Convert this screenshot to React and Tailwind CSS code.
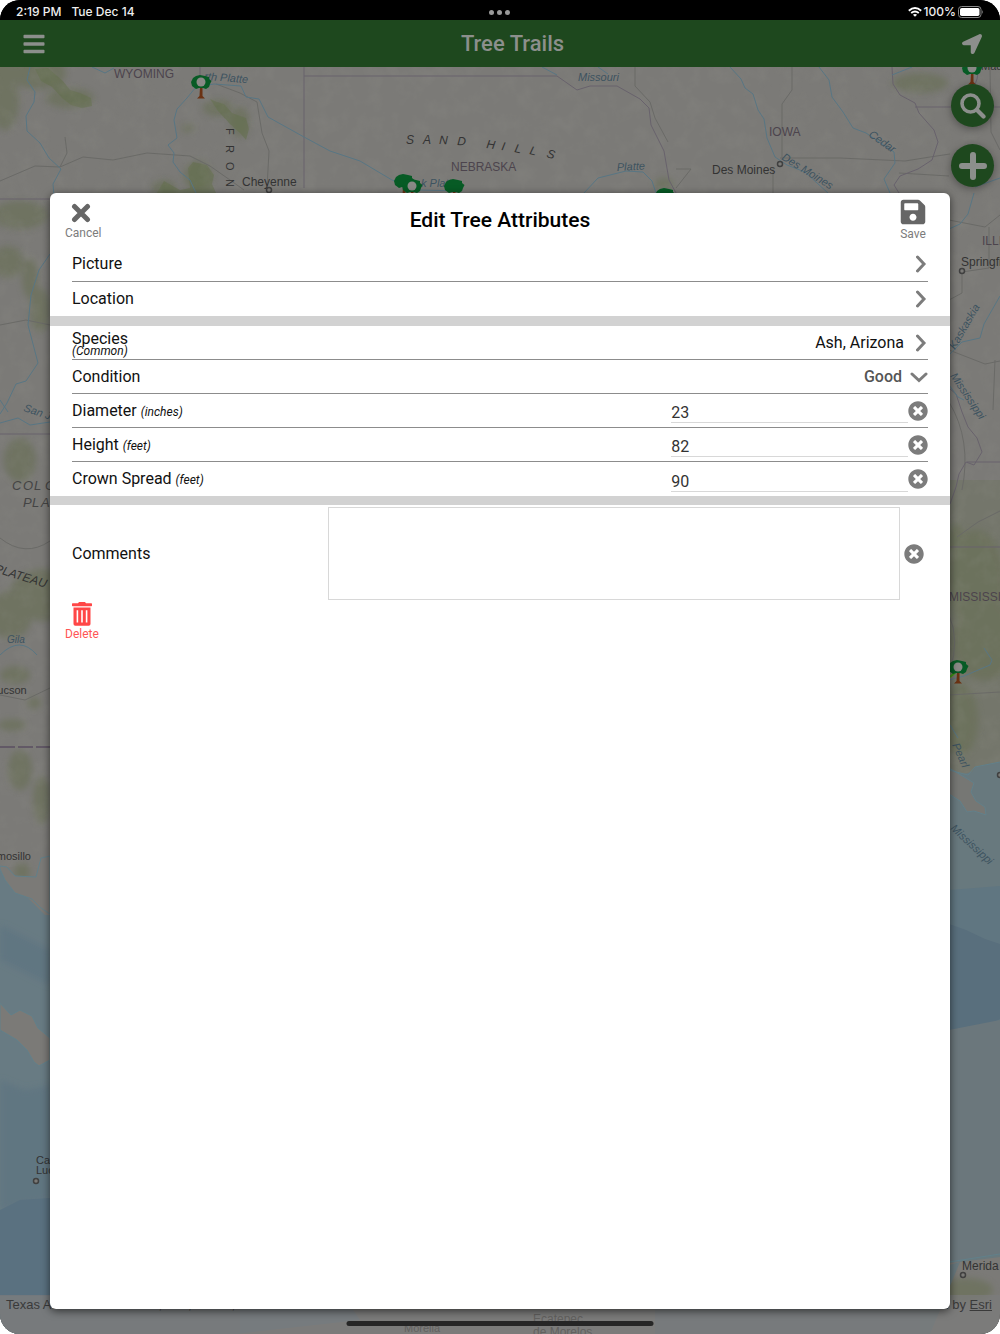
import { useState } from "react"
import { FaBars, FaLocationArrow, FaSave, FaTimesCircle } from "react-icons/fa"

const sandHills = [
    ["S", 410, 144, 0], ["A", 427, 144, 0], ["N", 443, 144, 2], ["D", 461, 145, 4],
    ["H", 490, 148, 8], ["I", 505, 150, 10], ["L", 518, 152, 12], ["L", 533, 154, 14], ["S", 550, 157, 16],
]

const rivers = [
    "M30 67 L27 80 L35 92 L34 102 L26 116 L27 131 L40 143 L49 158 L61 169 L53 184 L54 196",
    "M92 67 L105 73 L114 68",
    "M196 193 L190 180 L180 172 L173 162 L174 153 L168 145 L177 138 L174 120 L177 109 L187 98 L196 87 L214 84 L241 86 L246 97 L259 99 L268 117 L304 137 L330 151 L360 161 L392 180 L420 190 L460 191",
    "M584 193 L598 178 L626 171 L643 172 L652 181 L656 193",
    "M542 67 L557 75 M598 67 L608 74",
    "M730 67 L741 79 L745 88 L753 94 L758 110 L764 119 L767 138 L775 157 L787 165 L805 172 L828 193",
    "M819 67 L829 80 L832 97 L843 112 L853 128 L866 133 L894 152 L895 163 L884 179 L890 193",
    "M892 75 L912 67 M975 187 L1000 178",
    "M50 254 L39 270 L31 295 L28 325 L38 363 L26 381 L16 384 L7 403 L0 414",
    "M0 423 L18 418 L30 425 L50 422 M0 400 L8 412",
    "M0 655 Q20 635 37 655",
    "M974 193 L968 214 L960 224 L949 229",
    "M1000 296 L984 324 L980 338 L962 342 L949 355",
    "M949 385 L958 397 L964 400 M949 680 L964 676 L990 665 L992 660 L984 648",
    "M950 725 L958 738",
]

const roads = [
    "M0 181 L35 166 L60 167 L83 157 L113 160 L147 153 L190 156 L210 166 L230 180 L244 190",
    "M60 167 L67 153 L65 137 M216 84 L240 93 L257 102 L262 133 L269 151 L267 188",
    "M792 67 L792 90 L782 104 L782 158 M780 158 L840 158 L905 161 L930 157 L950 154",
    "M676 169 L691 169 L676 188 M990 67 L991 132 L1000 150 M899 173 L949 176",
    "M773 168 L773 193 M635 67 L635 86 L650 102 L655 118 L668 142",
    "M0 325 L26 320 L50 325 M0 538 Q25 558 50 541 M0 695 L25 700 L50 688",
    "M949 220 L985 227 L1000 215 M989 227 L989 268 L962 272 L962 293 L949 300",
    "M949 350 L985 364 L1000 361 M995 360 L993 410 M949 402 Q972 440 962 490",
    "M957 537 L978 522 L1000 511 M949 615 Q960 640 950 670 M949 695 L1000 692",
]

const borders = [
    "M304 67 L304 188 M304 76 L557 76 L577 90 L590 86 L617 86 L640 99 L649 108 L651 125 L664 151 L669 180 L676 193",
    "M979 67 L977 79 L972 93 L985 120",
    "M892 67 L893 84 L900 95 L915 103 L919 113 L934 130 L938 142 L932 160 L918 169 L900 176 L894 185 L899 193",
    "M915 107 L1000 107 M200 67 L200 76 M0 199 L50 199 M0 434 L50 434",
    "M949 388 L956 394 L962 412 L968 427 L977 438 L982 452 L974 465 L966 462 L959 474 L956 487 L950 504",
    "M967 462 L1000 462 M949 547 L1000 547",
]

const greens = [
    [0, 67, 14, 60], [38, 73, 28, 16], [70, 98, 24, 10], [5, 100, 14, 30], [218, 108, 15, 8], [240, 122, 9, 15],
    [198, 176, 14, 15], [164, 188, 12, 8], [188, 128, 7, 4], [20, 215, 28, 14], [8, 262, 16, 16],
    [30, 278, 8, 20], [40, 310, 10, 22], [20, 460, 16, 22], [43, 595, 34, 26], [10, 615, 22, 24],
    [15, 675, 15, 9], [34, 703, 7, 6], [12, 725, 14, 6], [20, 770, 12, 20], [42, 800, 9, 24],
    [22, 872, 8, 9], [36, 1035, 5, 12], [975, 580, 30, 50], [985, 640, 34, 40], [960, 720, 18, 36],
    [965, 1290, 28, 12], [955, 540, 10, 16], [920, 83, 28, 10], [664, 184, 10, 6],
]

function TreeMarker({ x, y, hollow = true }) {
    return (
        <g transform={`translate(${x} ${y})`}>
            <path d="M-1 5 L-1.5 14 L-4 16.500 H4 L1.500 14 L1.500 5Z" fill="#6b3213" />
            <path
                d="M-10 0 L-8 -4 L-5 -6 L-1 -7 L4 -6 L8 -5 L8 -3 L10.500 -1 L9 2 L8 5 L5 7 L2 6 L-2 6 L-5 7 L-9 4Z"
                fill="#075b25"
            />
            {hollow && <circle r="4.500" fill="#898986" />}
        </g>
    )
}

function MapLabel({ x, y, size = 11, fill = "#333", rotate = 0, italic = false, children }) {
    return (
        <text
            x={x}
            y={y}
            fontSize={size}
            fill={fill}
            fontStyle={italic ? "italic" : "normal"}
            transform={`rotate(${rotate} ${x} ${y})`}
        >
            {children}
        </text>
    )
}

function MapBackground() {
    return (
        <svg
            viewBox="0 67 1000 1267"
            preserveAspectRatio="xMidYMin slice"
            className="absolute inset-0 h-full w-full font-['Liberation_Sans',sans-serif]"
            aria-hidden="true"
        >
            <defs>
                <filter id="relief" x="0" y="0" width="100%" height="100%">
                    <feTurbulence type="fractalNoise" baseFrequency="0.06" numOctaves="4" seed="4" />
                    <feColorMatrix values="0 0 0 0 0.3  0 0 0 0 0.3  0 0 0 0 0.27  0.9 0 0 0 -0.38" />
                </filter>
                <filter id="soft"><feGaussianBlur stdDeviation="3" /></filter>
            </defs>
            <rect y="67" width="1000" height="1267" fill="#7b7a77" />
            <rect x="949" y="480" width="51" height="350" fill="#74766b" />
            <g fill="#697057" opacity="0.65" filter="url(#soft)">
                {greens.map(([cx, cy, rx, ry], i) => (
                    <ellipse key={i} cx={cx} cy={cy} rx={rx} ry={ry} />
                ))}
            </g>
            <g fill="#65704f" opacity="0.6">
                <path d="M35 69 L48 68 L56 75 L63 81 L70 90 L80 93 L91 98 L92 106 L82 108 L71 105 L62 98 L52 87 L41 81Z" />
                <path d="M210 99 L217 102 L224 104 L232 113 L246 118 L249 129 L246 140 L240 133 L230 124 L218 111Z" />
                <path d="M188 168 L193 162 L207 165 L214 175 L212 184 L216 193 L157 193 L164 181 L180 190 L190 188Z" />
            </g>
            <rect y="67" width="1000" height="800" filter="url(#relief)" opacity="0.4" />

            {/* Pacific and Gulf of California */}
            <path d="M0 867 L7 870 L15 885 L30 900 L45 915 L80 915 L360 1320 L235 1334 L0 1334Z" fill="#687b83" />
            <path d="M0 925 L50 950 L50 985 L0 960Z M0 1080 L25 1090 L50 1085 L50 1200 L0 1210Z" fill="#607681" filter="url(#soft)" />
            <path d="M0 1210 L20 1200 L50 1198 L50 1296 L0 1296Z" fill="#5a7180" />
            <path
                d="M0 1003 L11 1015 L20 1010 L32 1016 L38 1028 L50 1038 L50 1060 L39 1066 L34 1062 L27 1050 L17 1040 L0 1030Z"
                fill="#7b7a77"
                stroke="#62808a"
            />
            <path d="M0 866 L7 867 L15 876 L36 877 L41 858 L50 856 L50 914 L41 908 L32 899 L15 893 L5 880 L0 869Z" fill="#7b7a77" stroke="#62808a" />

            {/* Gulf of Mexico */}
            <path d="M949 770 L963 774 L972 772 L975 767 L1000 762 L1000 1257 L960 1262 L700 1334 L930 1334 L960 1262 L949 1263Z" fill="#68797e" />
            <path d="M949 890 L1000 886 L1000 1025 L949 1035Z" fill="#607681" />
            <path d="M949 924 L966 930 L985 939 L1000 944 L1000 1019 L980 1029 L949 1034Z" fill="#596f7d" />
            <path d="M949 1030 L1000 1020 L1000 1254 L949 1262Z" fill="#6b777c" />
            <path
                d="M949 768 L966 778 L974 783 L971 792 L976 801 L985 807 L986 815 L974 811 L967 812 L960 801 L949 794Z"
                fill="#767774"
                stroke="#62808a"
            />
            <path d="M0 1309 H240 V1334 H0Z M655 1309 H920 V1334 H655Z" fill="#6b777c" />
            <path d="M949 1262 L1000 1254 M949 770 L968 775 L975 767 L1000 762" fill="none" stroke="#62808a" />

            <g fill="none" strokeLinejoin="round">
                <g stroke="#6a6a67">{roads.map((d) => <path key={d} d={d} />)}</g>
                <g stroke="#68626c">{borders.map((d) => <path key={d} d={d} />)}</g>
                <g stroke="#587684">{rivers.map((d) => <path key={d} d={d} />)}</g>
                <path d="M0 747 H50" stroke="#625966" strokeWidth="2" strokeDasharray="15 3" />
            </g>

            <MapLabel x={114} y={78} size={12} fill="#4c444d">WYOMING</MapLabel>
            <MapLabel x={451} y={171} size={12} fill="#4c444d">NEBRASKA</MapLabel>
            <MapLabel x={769} y={136} size={12} fill="#4c444d">IOWA</MapLabel>
            <MapLabel x={982} y={245} size={12} fill="#4c444d">ILLINOIS</MapLabel>
            <MapLabel x={949} y={601} size={12} fill="#4c444d">MISSISSIPPI</MapLabel>
            <MapLabel x={242} y={186} size={12}>Cheyenne</MapLabel>
            <MapLabel x={712} y={174} size={12}>Des Moines</MapLabel>
            <MapLabel x={961} y={266} size={12}>Springfield</MapLabel>
            <MapLabel x={981} y={70}>Madison</MapLabel>
            <MapLabel x={-9} y={694}>Tucson</MapLabel>
            <MapLabel x={-21} y={860}>Hermosillo</MapLabel>
            <MapLabel x={36} y={1164}>Cabo San</MapLabel>
            <MapLabel x={36} y={1174}>Lucas</MapLabel>
            <MapLabel x={962} y={1270} size={12}>Merida</MapLabel>
            <MapLabel x={204} y={80} fill="#3d5360" rotate={4} italic>rth Platte</MapLabel>
            <MapLabel x={578} y={81} fill="#3d5360" italic>Missouri</MapLabel>
            <MapLabel x={617} y={171} fill="#3d5360" rotate={-3} italic>Platte</MapLabel>
            <MapLabel x={421} y={187} fill="#3d5360" italic>k Platte</MapLabel>
            <MapLabel x={868} y={136} fill="#3d5360" rotate={35} italic>Cedar</MapLabel>
            <MapLabel x={781} y={159} fill="#3d5360" rotate={32} italic>Des Moines</MapLabel>
            <MapLabel x={23} y={411} fill="#3d5360" rotate={18} italic>San Juan</MapLabel>
            <MapLabel x={7} y={643} size={10} fill="#3d5360" italic>Gila</MapLabel>
            <MapLabel x={955} y={350} fill="#3d5360" rotate={-60} italic>Kaskaskia</MapLabel>
            <MapLabel x={950} y={376} fill="#3d5360" rotate={56} italic>Mississippi</MapLabel>
            <MapLabel x={952} y={745} fill="#3d5360" rotate={66} italic>Pearl</MapLabel>
            <MapLabel x={950} y={829} fill="#3d5360" rotate={43} italic>Mississippi</MapLabel>
            <MapLabel x={-6} y={572} size={12} rotate={17} italic>PLATEAU</MapLabel>
            {["C", "O", "L", "O"].map((c, i) => (
                <MapLabel key={i} x={12 + i * 11} y={490} size={13} fill="#444" italic>{c}</MapLabel>
            ))}
            {["P", "L", "A"].map((c, i) => (
                <MapLabel key={i} x={23 + i * 9} y={507} size={13} fill="#444" italic>{c}</MapLabel>
            ))}
            {["F", "R", "O", "N"].map((c, i) => (
                <MapLabel key={c} x={226} y={128 + i * 17} rotate={90}>{c}</MapLabel>
            ))}
            {sandHills.map(([c, x, y, r]) => (
                <MapLabel key={x} x={x - 4} y={y} rotate={r} size={12} italic>{c}</MapLabel>
            ))}

            <g fill="#7b7a77" stroke="#404040" strokeWidth="1.500">
                <circle cx="269" cy="190" r="2.500" />
                <circle cx="780" cy="164" r="2.500" />
                <circle cx="962" cy="271" r="2.500" />
                <circle cx="36" cy="1181" r="2.500" />
                <circle cx="963" cy="1275" r="2.500" />
                <circle cx="1000" cy="775" r="2.500" />
            </g>

            <TreeMarker x={201} y={82} />
            <TreeMarker x={404} y={181} hollow={false} />
            <TreeMarker x={412} y={186} />
            <TreeMarker x={454} y={186} hollow={false} />
            <TreeMarker x={665} y={195} hollow={false} />
            <TreeMarker x={972} y={68} />
            <path d="M950 677 L957 671" stroke="#3f9a12" strokeWidth="2" />
            <TreeMarker x={958} y={667} />

            {/* pale strip under the attribution, with city names showing faintly through it */}
            <rect y="1295" width="1000" height="39" fill="#7c7c7c" opacity="0.7" />
            <MapLabel x={533} y={1323} size={12} fill="#62615f">Ecatepec</MapLabel>
            <MapLabel x={533} y={1336} size={12} fill="#62615f">de Morelos</MapLabel>
            <MapLabel x={404} y={1332} fill="#62615f">Morelia</MapLabel>
        </svg>
    )
}

function StatusBar() {
    return (
        <div className="grid h-5 grid-cols-3 items-center bg-black px-4 pt-1 font-['Inter',sans-serif] text-xs font-medium text-[#eee]">
            <div className="flex gap-[10px]">
                <span>2:19 PM</span>
                <span>Tue Dec 14</span>
            </div>
            <div className="flex justify-center gap-[3px]">
                <span className="size-[5px] rounded-full bg-[#999]" />
                <span className="size-[5px] rounded-full bg-[#999]" />
                <span className="size-[5px] rounded-full bg-[#999]" />
            </div>
            <div className="flex items-center justify-end gap-[2px]">
                <svg viewBox="0 0 14 10" className="h-[10px] w-[14px]" fill="none" stroke="#fff" strokeWidth="1.900">
                    <path d="M0.800 3.700 Q7 -1.600 13.200 3.700" />
                    <path d="M3.200 6.100 Q7 3 10.800 6.100" />
                    <path d="M7 9.800 L4.900 7.800 Q7 6.200 9.100 7.800Z" fill="#fff" stroke="none" />
                </svg>
                <span>100%</span>
                <svg viewBox="0 0 26 12" className="h-3 w-[26px]">
                    <rect x="0.500" y="0.500" width="22.500" height="11" rx="3" fill="none" stroke="#888" />
                    <rect x="2" y="2" width="19.500" height="8" rx="1.800" fill="#fff" />
                    <path d="M24.200 4 Q26 6 24.200 8Z" fill="#888" />
                </svg>
            </div>
        </div>
    )
}

function Chevron({ down = false }) {
    return (
        <svg
            viewBox={down ? "0 0 18 12" : "0 0 12 18"}
            className={down ? "h-3 w-[18px]" : "h-[18px] w-3"}
            fill="none"
            stroke="#7c7c7c"
            strokeWidth="3"
            strokeLinecap="round"
            strokeLinejoin="miter"
            aria-hidden="true"
        >
            <path d={down ? "M2 3 L9 9.500 L16 3" : "M1.500 2 L8 9 L1.500 16"} />
        </svg>
    )
}

function ClearButton({ label, onClick }) {
    return (
        <button type="button" aria-label={label} onClick={onClick} className="shrink-0 text-[#7c7c7c]">
            <FaTimesCircle className="size-5" />
        </button>
    )
}

function NumberRow({ id, label, unit, value, onChange, last }) {
    return (
        <div className={`mx-[22px] flex h-[34px] items-center ${last ? "" : "border-b border-[#8c8c8c]"}`}>
            <label htmlFor={id} className="w-[70%]">
                {label} <span className="text-xs italic">({unit})</span>
            </label>
            <input
                id={id}
                inputMode="numeric"
                value={value}
                onChange={(e) => onChange(e.target.value)}
                className="mb-1 h-[22px] min-w-0 flex-1 self-end border-b border-[#d8d8d8] pt-[2px] text-[#333] outline-none"
            />
            <ClearButton label={`Clear ${label}`} onClick={() => onChange("")} />
        </div>
    )
}

function EditTreeDialog() {
    const [condition, setCondition] = useState("Good")
    const [diameter, setDiameter] = useState("23")
    const [height, setHeight] = useState("82")
    const [crown, setCrown] = useState("90")
    const [comments, setComments] = useState("")

    return (
        <section
            role="dialog"
            aria-labelledby="dialog-title"
            className="relative mx-[5%] mt-[126px] mb-[25px] flex-1 rounded-md bg-white text-base text-[#111] shadow-[0_2px_8px_rgba(0,0,0,0.6)]"
        >
            <header className="grid h-[54px] grid-cols-[1fr_auto_1fr] items-center px-[15px] text-xs text-[#7c7c7c]">
                <button type="button" className="flex flex-col items-center justify-self-start">
                    <svg viewBox="0 0 20 20" className="mt-1 mr-1 mb-[2px] size-5" stroke="#666" strokeWidth="5" strokeLinecap="round">
                        <path d="M3.500 3.500 L16.500 16.500 M16.500 3.500 L3.500 16.500" />
                    </svg>
                    Cancel
                </button>
                <h2 id="dialog-title" className="text-[21px] font-medium text-black">Edit Tree Attributes</h2>
                <button type="button" className="mr-2 flex flex-col items-center justify-self-end">
                    <FaSave className="size-7 text-[#666]" />
                    Save
                </button>
            </header>

            <button type="button" className="mx-[22px] flex h-[35px] w-[calc(100%-44px)] items-center justify-between border-b border-[#8c8c8c]">
                Picture <Chevron />
            </button>
            <button type="button" className="flex h-[34px] w-full items-center justify-between px-[22px]">
                Location <Chevron />
            </button>
            <div className="h-[10px] bg-[#d2d2d2]" />

            <button type="button" className="mx-[22px] flex h-[34px] w-[calc(100%-44px)] items-center justify-between border-b border-[#8c8c8c] text-left">
                <span className="flex flex-col pt-1">
                    <span className="leading-3">Species</span>
                    <span className="text-xs leading-3 italic">(Common)</span>
                </span>
                <span className="flex items-center gap-3">
                    Ash, Arizona <Chevron />
                </span>
            </button>
            <div className="mx-[22px] flex h-[34px] items-center border-b border-[#8c8c8c]">
                <label htmlFor="condition">Condition</label>
                <select
                    id="condition"
                    value={condition}
                    onChange={(e) => setCondition(e.target.value)}
                    className="mr-2 flex-1 appearance-none font-medium text-[#555] outline-none [text-align-last:right]"
                >
                    <option>Good</option>
                    <option>Fair</option>
                    <option>Poor</option>
                </select>
                <Chevron down />
            </div>
            <NumberRow id="diameter" label="Diameter" unit="inches" value={diameter} onChange={setDiameter} />
            <NumberRow id="height" label="Height" unit="feet" value={height} onChange={setHeight} />
            <NumberRow id="crown" label="Crown Spread" unit="feet" value={crown} onChange={setCrown} last />
            <div className="h-[9px] bg-[#d2d2d2]" />

            <div className="mx-[22px] mt-[2px] flex items-center pr-1">
                <label htmlFor="comments" className="w-[30%]">Comments</label>
                <textarea
                    id="comments"
                    value={comments}
                    onChange={(e) => setComments(e.target.value)}
                    className="mr-1 h-[93px] min-w-0 flex-1 resize-none border border-[#d8d8d8] p-2 outline-none"
                />
                <ClearButton label="Clear Comments" onClick={() => setComments("")} />
            </div>

            <button type="button" className="mt-[2px] ml-[15px] flex flex-col items-center text-xs text-[#ff5555]">
                <svg viewBox="0 0 20 24" className="h-6 w-5" fill="#ff4747">
                    <path d="M0 1.800 Q0 1.200 0.700 1.200 H6 L7 0 H13 L14 1.200 H19.300 Q20 1.200 20 1.800 V3.600 Q20 4.200 19.300 4.200 H0.700 Q0 4.200 0 3.600Z" />
                    <path
                        fillRule="evenodd"
                        d="M1.500 5.500 H18.500 V22 Q18.500 23.800 16.700 23.800 H3.300 Q1.500 23.800 1.500 22Z M4.600 8.200 V20.500 H6.200 V8.200Z M9.200 8.200 V20.500 H10.800 V8.200Z M13.800 8.200 V20.500 H15.400 V8.200Z"
                    />
                </svg>
                Delete
            </button>
        </section>
    )
}

function App() {
    return (
        <div className="relative flex min-h-screen flex-col overflow-hidden rounded-[20px] bg-black font-['Roboto',sans-serif]">
            <StatusBar />
            <header className="grid h-[47px] grid-cols-[45px_1fr_auto] items-center bg-[#1e481e] px-[18px] text-[#8c8f8c]">
                <button type="button" aria-label="Menu" className="ml-1 justify-self-start">
                    <FaBars className="size-6" />
                </button>
                <h1 className="text-center text-[22px] font-medium">Tree Trails</h1>
                <button type="button" aria-label="My location">
                    <FaLocationArrow className="size-5" />
                </button>
            </header>

            <main className="relative flex flex-1 flex-col">
                <MapBackground />
                <footer className="absolute inset-x-0 bottom-0 flex h-[39px] justify-between px-[6px] font-['Liberation_Sans',sans-serif] text-[13px] leading-5 text-[#3a3a3a]">
                    <span>Texas A&amp;M Forest Service, Esri, HERE, Garmin</span>
                    <span className="pr-[2px]">Powered by <a href="#esri" className="underline">Esri</a></span>
                </footer>

                <div className="absolute top-[17px] right-[6px] flex flex-col gap-[17px] text-[#8c8f8c]">
                    <button type="button" aria-label="Search" className="flex size-[43px] items-center justify-center rounded-full bg-[#1e481e] shadow-[0_2px_8px_rgba(0,0,0,0.35)]">
                        <svg viewBox="0 0 26 26" className="size-[26px]" fill="none" stroke="currentColor" strokeLinecap="round">
                            <circle cx="10.500" cy="10.500" r="8.500" strokeWidth="3.600" />
                            <path d="M17 17 L23.500 23.500" strokeWidth="4.200" />
                        </svg>
                    </button>
                    <button type="button" aria-label="Add tree" className="flex size-[43px] items-center justify-center rounded-full bg-[#1e481e] shadow-[0_2px_8px_rgba(0,0,0,0.35)]">
                        <svg viewBox="0 0 30 30" className="size-[30px]" stroke="currentColor" strokeWidth="6" strokeLinecap="round">
                            <path d="M15 4 V26 M4 15 H26" />
                        </svg>
                    </button>
                </div>

                <EditTreeDialog />
                <div className="absolute bottom-2 left-1/2 h-[5px] w-[307px] -translate-x-1/2 rounded-full bg-[#262626]" />
            </main>
        </div>
    )
}

export default App
